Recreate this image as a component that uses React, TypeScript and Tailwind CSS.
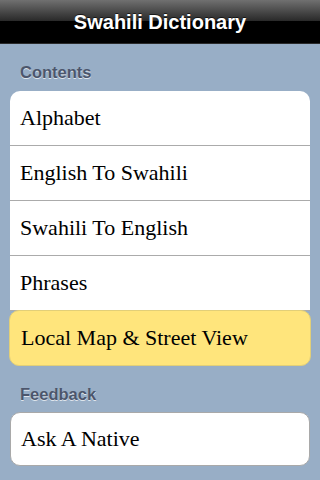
import React from "react";

const contents = ["Alphabet", "English To Swahili", "Swahili To English", "Phrases"];
const serif = '"Liberation Serif", "Times New Roman", serif';

function Row({ label, last }: { label: string; last?: boolean }) {
  return (
    <div
      className={`flex items-center px-[10px] text-[22px] text-black ${last ? "h-[52px]" : "h-[55px] border-b border-[#ababab]"}`}
      style={{ fontFamily: serif }}
    >
      {label}
    </div>
  );
}

function SectionLabel({ children }: { children: React.ReactNode }) {
  return (
    <div
      className="px-[20px] text-[16.5px] font-bold text-[#4c566c] [text-shadow:0_1px_0_rgba(255,255,255,0.7)]"
      style={{ fontFamily: '"Liberation Sans", Arial, sans-serif' }}
    >
      {children}
    </div>
  );
}

export default function App() {
  return (
    <div className="flex h-[480px] w-[320px] flex-col overflow-hidden bg-[#98aec6]">
      <div className="flex h-[44px] items-center justify-center border-b border-[#2a2a2a] bg-[linear-gradient(to_bottom,#707070_0%,#2a2a2a_48%,#000000_50%,#000000_100%)]">
        <span
          className="text-[20px] font-bold text-white [text-shadow:0_-1px_0_rgba(0,0,0,0.6)]"
          style={{ fontFamily: '"Liberation Sans", Arial, sans-serif' }}
        >
          Swahili Dictionary
        </span>
      </div>

      <div className="pt-[16px]">
        <SectionLabel>Contents</SectionLabel>
      </div>

      <div className="mx-[10px] mt-[6px] flex flex-col">
        <div className="overflow-hidden rounded-t-[10px] bg-white">
          {contents.map((c) => (
            <Row key={c} label={c} />
          ))}
        </div>
        <div
          className="-mx-px -mt-px flex h-[56px] items-center rounded-[10px] border border-[#e2cf78] bg-[#ffe57c] px-[11px] text-[22px] text-black"
          style={{ fontFamily: serif }}
        >
          Local Map &amp; Street View
        </div>
      </div>

      <div className="pt-[16px]">
        <SectionLabel>Feedback</SectionLabel>
      </div>

      <div className="mx-[10px] mt-[5px] overflow-hidden rounded-[10px] border border-[#a9a9a9] bg-white">
        <Row label="Ask A Native" last />
      </div>
    </div>
  );
}
